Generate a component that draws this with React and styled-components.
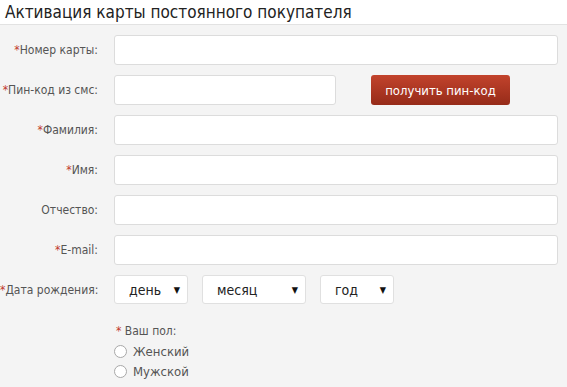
import React from "react";
import styled, { createGlobalStyle } from "styled-components";

const FONT = `"DejaVu Sans Condensed", "DejaVu Sans", Verdana, sans-serif`;

const GlobalStyle = createGlobalStyle`
  html, body {
    margin: 0;
    padding: 0;
    background: #f4f4f4;
  }
  body {
    font-family: ${FONT};
  }
`;

const Page = styled.div`
  width: 567px;
  height: 387px;
  overflow: hidden;
  background: #f4f4f4;
`;

const Header = styled.div`
  height: 24px;
  background: #fff;
  border-bottom: 1px solid #e2e2e2;
  padding-left: 5px;
  display: flex;
  align-items: center;
`;

const Title = styled.h1`
  margin: 0;
  font-family: ${FONT};
  font-weight: normal;
  font-size: 17px;
  color: #222;
  white-space: nowrap;
`;

const Form = styled.div`
  display: flex;
  flex-direction: column;
  gap: 10px;
  padding: 10px 9px 0 0;
`;

const Row = styled.div`
  display: grid;
  grid-template-columns: 98px 1fr;
  column-gap: 16px;
  align-items: center;
`;

const Label = styled.label`
  text-align: right;
  font-size: 12px;
  color: #555;
  white-space: nowrap;
`;

const Star = styled.span`
  color: #c0392b;
`;

const Input = styled.input`
  box-sizing: border-box;
  height: 30px;
  width: ${p => p.$width || "100%"};
  border: 1px solid #dcdcdc;
  border-radius: 3px;
  background: #fff;
  outline: none;
  font-family: ${FONT};
`;

const Inline = styled.div`
  display: flex;
  align-items: center;
  gap: 35px;
`;

const PinButton = styled.button`
  height: 30px;
  width: 139px;
  border: none;
  border-radius: 3px;
  background: linear-gradient(#c2432c, #962b19);
  color: #fff;
  font-family: ${FONT};
  font-size: 13px;
  cursor: pointer;
`;

const Selects = styled.div`
  display: flex;
  gap: 14px;
`;

const SelectBox = styled.div`
  box-sizing: border-box;
  height: 29px;
  width: ${p => p.$width}px;
  border: 1px solid #e0e0e0;
  border-radius: 3px;
  background: #fff;
  display: flex;
  align-items: center;
  justify-content: space-between;
  padding: 0 7px 0 14px;
  font-size: 14px;
  color: #222;
`;

const Arrow = styled.span`
  font-size: 9px;
  color: #111;
`;

const Gender = styled.div`
  margin: 17px 0 0 114px;
  display: flex;
  flex-direction: column;
`;

const GenderTitle = styled.div`
  height: 20px;
  line-height: 20px;
  font-size: 12px;
  color: #555;
  padding-left: 2px;
`;

const RadioRow = styled.label`
  height: 20px;
  display: flex;
  align-items: center;
  gap: 6px;
  font-size: 13px;
  color: #555;
`;

const RadioCircle = styled.span`
  box-sizing: border-box;
  width: 13px;
  height: 13px;
  border-radius: 50%;
  border: 1px solid #a8a8a8;
  background: #fff;
`;

const fields = [
  { label: "Номер карты:", req: true },
  { label: "Пин-код из смс:", req: true, pin: true },
  { label: "Фамилия:", req: true },
  { label: "Имя:", req: true },
  { label: "Отчество:", req: false },
  { label: "E-mail:", req: true },
];

const dateParts = [
  { text: "день", width: 74 },
  { text: "месяц", width: 104 },
  { text: "год", width: 74 },
];

export default function App() {
  return (
    <Page>
      <GlobalStyle />
      <Header>
        <Title>Активация карты постоянного покупателя</Title>
      </Header>
      <Form>
        {fields.map(f => (
          <Row key={f.label}>
            <Label>
              {f.req && <Star>*</Star>}
              {f.label}
            </Label>
            {f.pin ? (
              <Inline>
                <Input $width="222px" />
                <PinButton>получить пин-код</PinButton>
              </Inline>
            ) : (
              <Input />
            )}
          </Row>
        ))}
        <Row>
          <Label>
            <Star>*</Star>Дата рождения:
          </Label>
          <Selects>
            {dateParts.map(d => (
              <SelectBox key={d.text} $width={d.width}>
                <span>{d.text}</span>
                <Arrow>▼</Arrow>
              </SelectBox>
            ))}
          </Selects>
        </Row>
      </Form>
      <Gender>
        <GenderTitle>
          <Star>*</Star> Ваш пол:
        </GenderTitle>
        <RadioRow>
          <RadioCircle />
          Женский
        </RadioRow>
        <RadioRow>
          <RadioCircle />
          Мужской
        </RadioRow>
      </Gender>
    </Page>
  );
}
